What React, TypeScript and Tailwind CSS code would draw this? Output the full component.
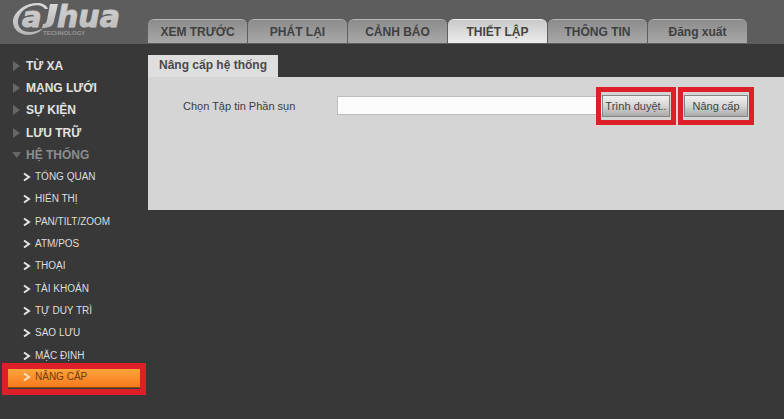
import { FunctionComponent, ReactNode, useState } from "react";
import clsx from "clsx";

const TABS = [
  "XEM TRƯỚC",
  "PHÁT LẠI",
  "CẢNH BÁO",
  "THIẾT LẬP",
  "THÔNG TIN",
  "Đăng xuất",
];

const GROUPS = ["TỪ XA", "MẠNG LƯỚI", "SỰ KIỆN", "LƯU TRỮ", "HỆ THỐNG"];

const SYSTEM_ITEMS = [
  "TỔNG QUAN",
  "HIỂN THỊ",
  "PAN/TILT/ZOOM",
  "ATM/POS",
  "THOẠI",
  "TÀI KHOẢN",
  "TỰ DUY TRÌ",
  "SAO LƯU",
  "MẶC ĐỊNH",
  "NÂNG CẤP",
];

const Logo: FunctionComponent = () => (
  <svg
    width="148"
    height="44"
    viewBox="0 0 148 44"
    className="shrink-0"
    role="img"
    aria-label="alhua technology"
  >
    <defs>
      <linearGradient id="metal" x1="0" y1="0" x2="0" y2="1">
        <stop offset="0" stopColor="#d8d8d8" />
        <stop offset="1" stopColor="#b8b8b8" />
      </linearGradient>
    </defs>
    <path
      d="M48 9C46 3 38 2 30 4C20 7 12 15 13 23C14 32 24 37 34 34C38 33 41 31 43 28C37 32 30 33 24 31C17 28 16 20 21 13C26 6 38 3 43 7L45 9Z"
      fill="url(#metal)"
    />
    <path
      d="M50 4L58 4L54 21C53 26 50 28 42 28L43 24C46 24 46 23 47 20Z"
      fill="url(#metal)"
    />
    <g
      fill="url(#metal)"
      stroke="#c6c6c6"
      fontFamily="DejaVu Sans, sans-serif"
      fontWeight="bold"
      fontStyle="italic"
    >
      <text x="22" y="27" fontSize="29" strokeWidth="1">
        a
      </text>
      <text x="57" y="27" fontSize="30" strokeWidth="1">
        hua
      </text>
    </g>
    <text
      x="43"
      y="35"
      fill="#969696"
      fontFamily="Liberation Sans, Arial, sans-serif"
      fontSize="6"
      fontWeight="bold"
    >
      TECHNOLOGY
    </text>
  </svg>
);

const Marked: FunctionComponent<{ children: ReactNode }> = ({ children }) => (
  <div className="relative flex">
    {children}
    <span className="pointer-events-none absolute -inset-x-[6px] -inset-y-2 border-[5px] border-[#dc1f29]" />
  </div>
);

const buttonStyle =
  "h-[22px] border border-[#858585] bg-linear-to-b from-[#f0f0f0] via-[#d6d6d6] to-[#aaaaaa] text-center text-[11px] leading-[20px] whitespace-nowrap text-[#444444]";

const App: FunctionComponent = () => {
  const [tab, setTab] = useState("THIẾT LẬP");
  const [item, setItem] = useState("NÂNG CẤP");
  const [file, setFile] = useState("");

  return (
    <div className="min-h-screen bg-[#383838] font-['Liberation_Sans',Arial,sans-serif]">
      <header className="flex h-11 bg-[#5d5d5d]">
        <Logo />
        <nav className="flex items-end gap-px">
          {TABS.map((name) => (
            <button
              key={name}
              onClick={() => setTab(name)}
              className={clsx(
                "mb-px h-6 w-[99px] rounded-t-md border-t bg-linear-to-b text-[12px] leading-[22px] font-bold",
                tab === name
                  ? "border-[#eeeeee] from-[#c8c8c8] to-[#ededed] text-[#444444]"
                  : "border-[#b5b5b5] from-[#8c8c8c] to-[#a8a8a8] text-[#404040]"
              )}
            >
              {name}
            </button>
          ))}
        </nav>
      </header>

      <div className="flex">
        <aside className="w-[148px] shrink-0 pt-[11px]">
          <ul className="grid h-[111px] pl-3">
            {GROUPS.map((group) => {
              const open = group === "HỆ THỐNG";
              return (
                <li key={group} className="flex items-center">
                  <button
                    className={clsx(
                      "flex items-center gap-[5px] text-[12px] leading-[16px] font-bold",
                      open ? "text-[#8d8d8d]" : "text-[#e2e2e2]"
                    )}
                  >
                    <svg width="9" height="10" viewBox="0 0 9 10">
                      <path
                        d={open ? "M0 2H9L5 8Z" : "M1 0L8 5L1 10Z"}
                        fill="#666666"
                      />
                    </svg>
                    {group}
                  </button>
                </li>
              );
            })}
          </ul>

          <ul className="grid h-[223px]">
            {SYSTEM_ITEMS.map((name) => {
              const active = item === name;
              return (
                <li key={name} className="relative flex items-center pr-[7px] pl-2">
                  <button
                    onClick={() => setItem(name)}
                    className={clsx(
                      "flex h-5 w-full items-center gap-1 pl-[15px] text-[10px] leading-[16px]",
                      active
                        ? "border-b border-[#8a4a10] bg-linear-to-b from-[#ffa63c] to-[#f67a1c] text-[#6b3d10]"
                        : "text-[#dddddd]"
                    )}
                  >
                    <svg width="8" height="10" viewBox="0 0 8 10">
                      <path
                        d="M1 1.5L6 5L1 8.5"
                        fill="none"
                        stroke={active ? "#ffe3bd" : "#e6e6e6"}
                        strokeWidth="2"
                      />
                    </svg>
                    {name}
                  </button>
                  {active && (
                    <span className="pointer-events-none absolute right-[2px] left-[2px] -top-1 -bottom-[6px] border-[6px] border-[#dc1f29]" />
                  )}
                </li>
              );
            })}
          </ul>
        </aside>

        <main className="min-w-0 flex-1 pt-[11px]">
          <h1 className="h-[22px] w-[130px] bg-[#dedede] text-center text-[12px] leading-[21px] font-bold whitespace-nowrap text-[#4a4a4a]">
            Nâng cấp hệ thống
          </h1>
          <form
            onSubmit={(e) => e.preventDefault()}
            className="flex h-[133px] items-start bg-[#d5d5d5] pt-[18px] pr-9 pl-[35px]"
          >
            <label
              htmlFor="firmware"
              className="w-[154px] shrink-0 text-[11px] leading-[22px] text-[#3c3c3c]"
            >
              Chọn Tập tin Phần sụn
            </label>
            <input
              id="firmware"
              type="text"
              value={file}
              onChange={(e) => setFile(e.target.value)}
              className="mt-px h-[19px] min-w-0 flex-1 border border-[#bdbdbd] border-r-transparent bg-[#fcfcfc] px-1 text-[11px] outline-none"
            />
            <div className="flex gap-[14px]">
              <Marked>
                <button type="button" className={clsx(buttonStyle, "w-[68px]")}>
                  Trình duyệt..
                </button>
              </Marked>
              <Marked>
                <button type="submit" className={clsx(buttonStyle, "w-[64px]")}>
                  Nâng cấp
                </button>
              </Marked>
            </div>
          </form>
        </main>
      </div>
    </div>
  );
};

export default App;
